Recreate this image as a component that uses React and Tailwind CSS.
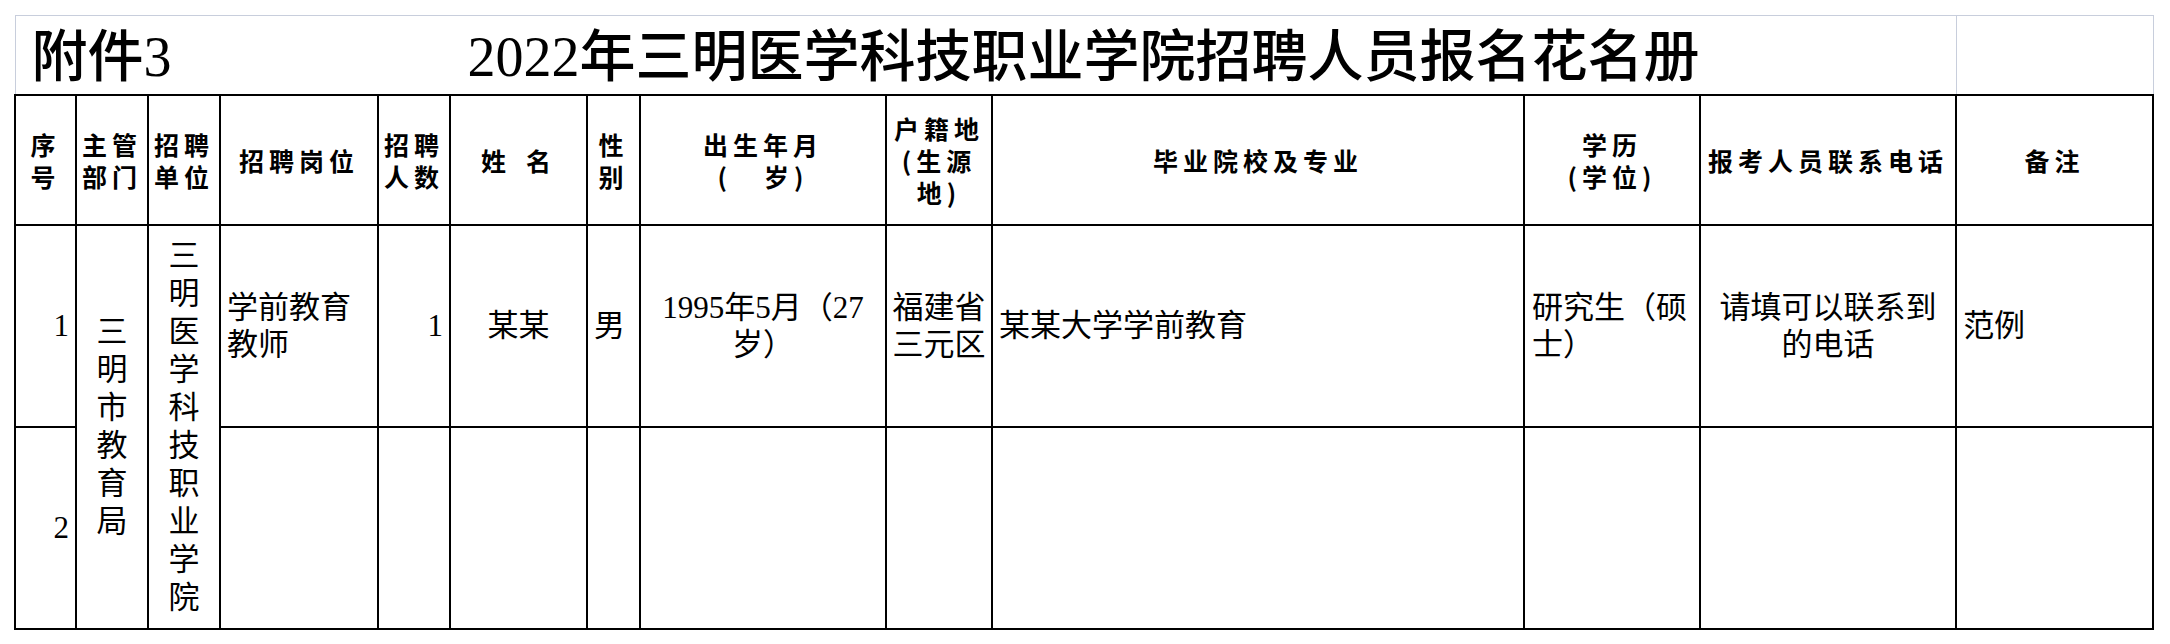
import React from "react";

const th =
  "border-2 border-black align-middle text-center p-0 font-['Noto_Sans_CJK_SC',sans-serif] font-bold text-[25px] leading-[32px] tracking-[5px] whitespace-nowrap";
const td = "border-2 border-black align-middle p-0 text-[31px] leading-[37px]";

const Vertical = ({ text }) => (
  <div className="flex flex-col items-center leading-[38px]">
    {text.split("").map((c, i) => (
      <span key={i}>{c}</span>
    ))}
  </div>
);

export default function App() {
  return (
    <div className="w-[2170px] h-[644px] bg-white pt-[15px] pl-[14px] font-['Liberation_Serif','Noto_Sans_CJK_SC',serif] text-black">
      <table className="table-fixed border-collapse w-[2140px]">
        <colgroup>
          <col className="w-[61px]" />
          <col className="w-[72px]" />
          <col className="w-[72px]" />
          <col className="w-[158px]" />
          <col className="w-[72px]" />
          <col className="w-[137px]" />
          <col className="w-[53px]" />
          <col className="w-[246px]" />
          <col className="w-[106px]" />
          <col className="w-[532px]" />
          <col className="w-[176px]" />
          <col className="w-[256px]" />
          <col className="w-[197px]" />
        </colgroup>
        <tbody>
          <tr className="h-[79px]">
            <td colSpan={12} className="border border-[#c8cedc] align-middle p-0">
              <div className="flex items-center pt-[5px] text-[56px] font-medium leading-none whitespace-nowrap">
                <span className="w-[452px] shrink-0 pl-[16px]">附件3</span>
                <span>2022年三明医学科技职业学院招聘人员报名花名册</span>
              </div>
            </td>
            <td className="border border-[#c8cedc]" />
          </tr>

          <tr className="h-[130px]">
            <td className={th}>序<br />号</td>
            <td className={th}>主管<br />部门</td>
            <td className={th}>招聘<br />单位</td>
            <td className={th}>招聘岗位</td>
            <td className={th}>招聘<br />人数</td>
            <td className={th}>
              <span className="mr-[15px]">姓</span>名
            </td>
            <td className={th}>性<br />别</td>
            <td className={th}>
              出生年月
              <br />(<span className="inline-block w-[32px]" />岁)
            </td>
            <td className={th}>户籍地<br />(生源<br />地)</td>
            <td className={th}>毕业院校及专业</td>
            <td className={th}>学历<br />(学位)</td>
            <td className={th}>报考人员联系电话</td>
            <td className={th}>备注</td>
          </tr>

          <tr className="h-[202px]">
            <td className={td + " text-right pr-[6px]"}>1</td>
            <td rowSpan={2} className={td + " text-center"}>
              <Vertical text="三明市教育局" />
            </td>
            <td rowSpan={2} className={td + " text-center"}>
              <Vertical text="三明医学科技职业学院" />
            </td>
            <td className={td + " pl-[6px]"}>学前教育<br />教师</td>
            <td className={td + " text-right pr-[6px]"}>1</td>
            <td className={td + " text-center"}>某某</td>
            <td className={td + " pl-[6px]"}>男</td>
            <td className={td + " text-center whitespace-nowrap"}>
              1995年5月（27
              <br />岁）
            </td>
            <td className={td + " text-center"}>福建省<br />三元区</td>
            <td className={td + " pl-[6px]"}>某某大学学前教育</td>
            <td className={td + " pl-[7px] whitespace-nowrap"}>研究生（硕<br />士）</td>
            <td className={td + " text-center"}>请填可以联系到<br />的电话</td>
            <td className={td + " pl-[6px]"}>范例</td>
          </tr>

          <tr className="h-[202px]">
            <td className={td + " text-right pr-[6px]"}>2</td>
            <td className={td} />
            <td className={td} />
            <td className={td} />
            <td className={td} />
            <td className={td} />
            <td className={td} />
            <td className={td} />
            <td className={td} />
            <td className={td} />
            <td className={td} />
          </tr>
        </tbody>
      </table>
    </div>
  );
}
